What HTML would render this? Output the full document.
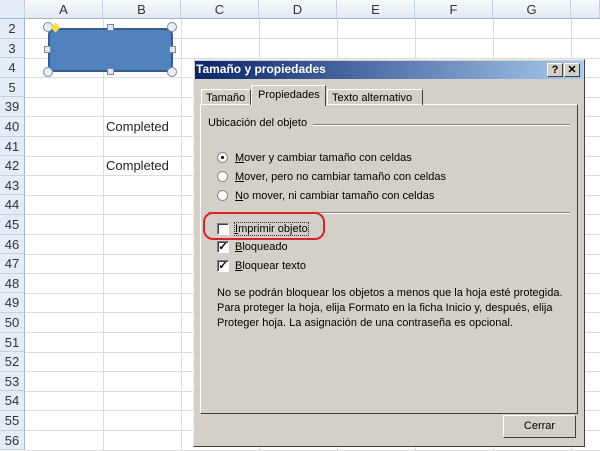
<!DOCTYPE html>
<html><head><style>
body{margin:0;width:600px;height:450px;overflow:hidden;background:#fff;font-family:"Liberation Sans",sans-serif;position:relative}
.a{position:absolute}
.ch{position:absolute;top:0;height:19px;background:linear-gradient(#f7f9fc,#e2e9f3);border-right:1px solid #c5d0df;border-bottom:1px solid #9eb6ce;font-size:13px;color:#333;text-align:center;line-height:20px;box-sizing:border-box}
.rh{position:absolute;left:0;width:25px;background:#e4ecf7;border-right:1px solid #9eb6ce;border-bottom:1px solid #c5d0df;font-size:13px;color:#333;text-align:center;box-sizing:border-box}
.hl{position:absolute;left:25px;width:575px;height:1px;background:#dadcdd}
.vl{position:absolute;top:19px;height:431px;width:1px;background:#dadcdd}
.d{font-family:"Liberation Sans",sans-serif;font-size:11px;color:#000;position:absolute;white-space:nowrap}
.h{width:7px;height:7px;border:1px solid #7a8a9a;background:#dde8f4;position:absolute;box-sizing:border-box}
.c{width:10px;height:10px;border:1px solid #7a8a9a;background:#e8eef5;border-radius:50%;position:absolute;box-sizing:border-box}
.rad{width:11px;height:11px;border-radius:50%;background:#fff;border:1px solid #888;position:absolute;box-sizing:border-box}
.cb{width:12px;height:12px;background:#fff;border:1px solid;border-color:#808080 #fff #fff #808080;box-shadow:inset 1px 1px #404040;position:absolute;box-sizing:border-box;font-size:11px;line-height:10px;text-align:center;font-weight:bold}
</style></head><body>
<div class="ch" style="left:0;width:25px;background:#e4ecf7"></div>
<div class="ch" style="left:25px;width:78px">A</div>
<div class="ch" style="left:103px;width:78px">B</div>
<div class="ch" style="left:181px;width:78px">C</div>
<div class="ch" style="left:259px;width:78px">D</div>
<div class="ch" style="left:337px;width:78px">E</div>
<div class="ch" style="left:415px;width:78px">F</div>
<div class="ch" style="left:493px;width:78px">G</div>
<div class="ch" style="left:571px;width:29px"></div>
<div class="vl" style="left:103px"></div><div class="vl" style="left:181px"></div><div class="vl" style="left:259px"></div><div class="vl" style="left:337px"></div><div class="vl" style="left:415px"></div><div class="vl" style="left:493px"></div><div class="vl" style="left:571px"></div>
<div id="rows"></div>
<script>
var n=[2,3,4,5,39,40,41,42,43,44,45,46,47,48,49,50,51,52,53,54,55,56],h='';
for(var i=0;i<n.length;i++){var t=19+i*19.6;h+='<div class="rh" style="top:'+t+'px;height:19.6px;line-height:20px">'+n[i]+'</div><div class="hl" style="top:'+(t+19)+'px"></div>';}
document.getElementById('rows').innerHTML=h;
</script>
<div class="a" style="left:106px;top:119px;font-size:13px;color:#222">Completed</div>
<div class="a" style="left:106px;top:158px;font-size:13px;color:#222">Completed</div>
<div class="a" style="left:48px;top:28px;width:125px;height:44px;background:#4f81bd;border:2px solid #385d8a;border-radius:7px;box-sizing:border-box"></div>
<div class="c" style="left:43px;top:22px"></div><div class="c" style="left:167px;top:22px"></div><div class="c" style="left:43px;top:67px"></div><div class="c" style="left:167px;top:67px"></div>
<div class="h" style="left:107px;top:24px"></div><div class="h" style="left:107px;top:68px"></div><div class="h" style="left:44px;top:46px"></div><div class="h" style="left:169px;top:46px"></div>
<div class="a" style="left:52px;top:24px;width:7px;height:7px;background:#f4e04a;transform:rotate(45deg)"></div>
<!-- dialog -->
<div class="a" style="left:193px;top:59px;width:392px;height:388px;background:#d4d0c8;border:1px solid;border-color:#eee #404040 #404040 #eee;box-sizing:border-box"></div>
<div class="a" style="left:195px;top:61px;width:388px;height:18px;background:linear-gradient(90deg,#0a246a,#a6caf0)"></div>
<div class="d" style="left:196px;top:62px;color:#fff;font-weight:bold;font-size:12px">Tamaño y propiedades</div>
<div class="a" style="left:547px;top:63px;width:16px;height:14px;background:#d4d0c8;border:1px solid;border-color:#fff #404040 #404040 #fff;box-sizing:border-box;font:bold 11px sans-serif;text-align:center;line-height:12px">?</div>
<div class="a" style="left:564px;top:63px;width:16px;height:14px;background:#d4d0c8;border:1px solid;border-color:#fff #404040 #404040 #fff;box-sizing:border-box;font:bold 11px sans-serif;text-align:center;line-height:12px">✕</div>
<div class="a" style="left:200px;top:104px;width:378px;height:310px;border:1px solid;border-color:#fff #404040 #404040 #fff;box-sizing:border-box"></div>
<div class="a" style="left:201px;top:89px;width:50px;height:16px;border:1px solid;border-color:#fff #404040 transparent #fff;border-bottom:none;box-sizing:border-box"></div>
<div class="d" style="left:206px;top:92px">Tamaño</div>
<div class="a" style="left:251px;top:85px;width:75px;height:21px;background:#d4d0c8;border:1px solid;border-color:#fff #404040 transparent #fff;border-bottom:none;box-sizing:border-box"></div>
<div class="d" style="left:258px;top:89px">Propiedades</div>
<div class="a" style="left:327px;top:89px;width:96px;height:16px;border:1px solid;border-color:#fff #404040 transparent #fff;border-bottom:none;box-sizing:border-box"></div>
<div class="d" style="left:332px;top:92px">Texto alternativo</div>
<div class="d" style="left:208px;top:117px">Ubicación del objeto</div>
<div class="a" style="left:313px;top:124px;width:257px;height:1px;background:#808080;border-bottom:1px solid #fff"></div>
<div class="rad" style="left:217px;top:152px"><div style="width:3px;height:3px;background:#000;border-radius:50%;margin:3px"></div></div>
<div class="d" style="left:235px;top:152px"><u>M</u>over y cambiar tamaño con celdas</div>
<div class="rad" style="left:217px;top:171px"></div>
<div class="d" style="left:235px;top:171px"><u>M</u>over, pero no cambiar tamaño con celdas</div>
<div class="rad" style="left:217px;top:190px"></div>
<div class="d" style="left:235px;top:190px"><u>N</u>o mover, ni cambiar tamaño con celdas</div>
<div class="a" style="left:208px;top:212px;width:362px;height:1px;background:#808080;border-bottom:1px solid #fff"></div>
<div class="cb" style="left:217px;top:223px"></div>
<div class="d" style="left:235px;top:223px;outline:1px dotted #333"><u>I</u>mprimir objeto</div>
<div class="a" style="left:203px;top:212px;width:122px;height:28px;border:2px solid #d8232a;border-radius:10px;box-sizing:border-box"></div>
<div class="cb" style="left:217px;top:241px">✓</div>
<div class="d" style="left:235px;top:241px"><u>B</u>loqueado</div>
<div class="cb" style="left:217px;top:260px">✓</div>
<div class="d" style="left:235px;top:260px"><u>B</u>loquear texto</div>
<div class="d" style="left:217px;top:286px;line-height:15px">No se podrán bloquear los objetos a menos que la hoja esté protegida.<br>Para proteger la hoja, elija Formato en la ficha Inicio y, después, elija<br>Proteger hoja. La asignación de una contraseña es opcional.</div>
<div class="a" style="left:503px;top:415px;width:73px;height:23px;border:1px solid;border-color:#fff #404040 #404040 #fff;box-sizing:border-box;text-align:center;font:11px 'Liberation Sans',sans-serif;line-height:20px">Cerrar</div>
</body></html>
